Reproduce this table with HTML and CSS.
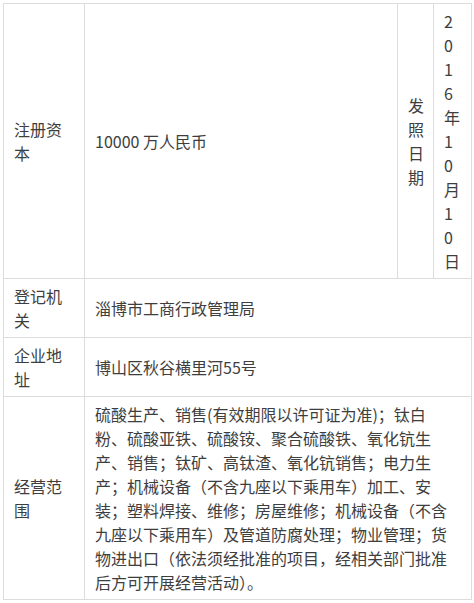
FILE: index.html
```html
<!DOCTYPE html>
<html lang="zh-CN">
<head>
<meta charset="utf-8">
<title>企业信息</title>
<link rel="stylesheet" href="styles.css">
</head>
<body>
<table class="info">
  <colgroup>
    <col class="c-label">
    <col class="c-value">
    <col class="c-label2">
    <col class="c-date">
  </colgroup>
  <tr>
    <td class="label">注册资本</td>
    <td class="value">10000 万人民币</td>
    <td class="label narrow">发照日期</td>
    <td class="label narrow date">2016年10月10日</td>
  </tr>
  <tr>
    <td class="label">登记机关</td>
    <td class="value wide" colspan="3">淄博市工商行政管理局</td>
  </tr>
  <tr>
    <td class="label">企业地址</td>
    <td class="value wide" colspan="3">博山区秋谷横里河55号</td>
  </tr>
  <tr>
    <td class="label">经营范围</td>
    <td class="value wide" colspan="3">硫酸生产、销售(有效期限以许可证为准)；钛白粉、硫酸亚铁、硫酸铵、聚合硫酸铁、氧化钪生产、销售；钛矿、高钛渣、氧化钪销售；电力生产；机械设备（不含九座以下乘用车）加工、安装；塑料焊接、维修；房屋维修；机械设备（不含九座以下乘用车）及管道防腐处理；物业管理；货物进出口（依法须经批准的项目，经相关部门批准后方可开展经营活动）。</td>
  </tr>
</table>
</body>
</html>
```

FILE: styles.css
```css
html, body {
  margin: 0;
  padding: 0;
  background: #ffffff;
}

body {
  font-family: "Noto Sans CJK SC", "Noto Sans", sans-serif;
  font-size: 16px;
  line-height: 24px;
  color: #3e3e3e;
}

.info {
  border-collapse: collapse;
  table-layout: fixed;
  width: 469px;
  margin: 3px 0 0 3px;
}

.c-label { width: 81px; }
.c-value { width: 313px; }
.c-label2 { width: 36px; }
.c-date { width: 38px; }

.info td {
  border: 1px solid #dcdcdc;
  padding: 5px 10px;
  vertical-align: middle;
  word-break: break-all;
}

.info td.wide {
  padding-right: 16px;
}
```
